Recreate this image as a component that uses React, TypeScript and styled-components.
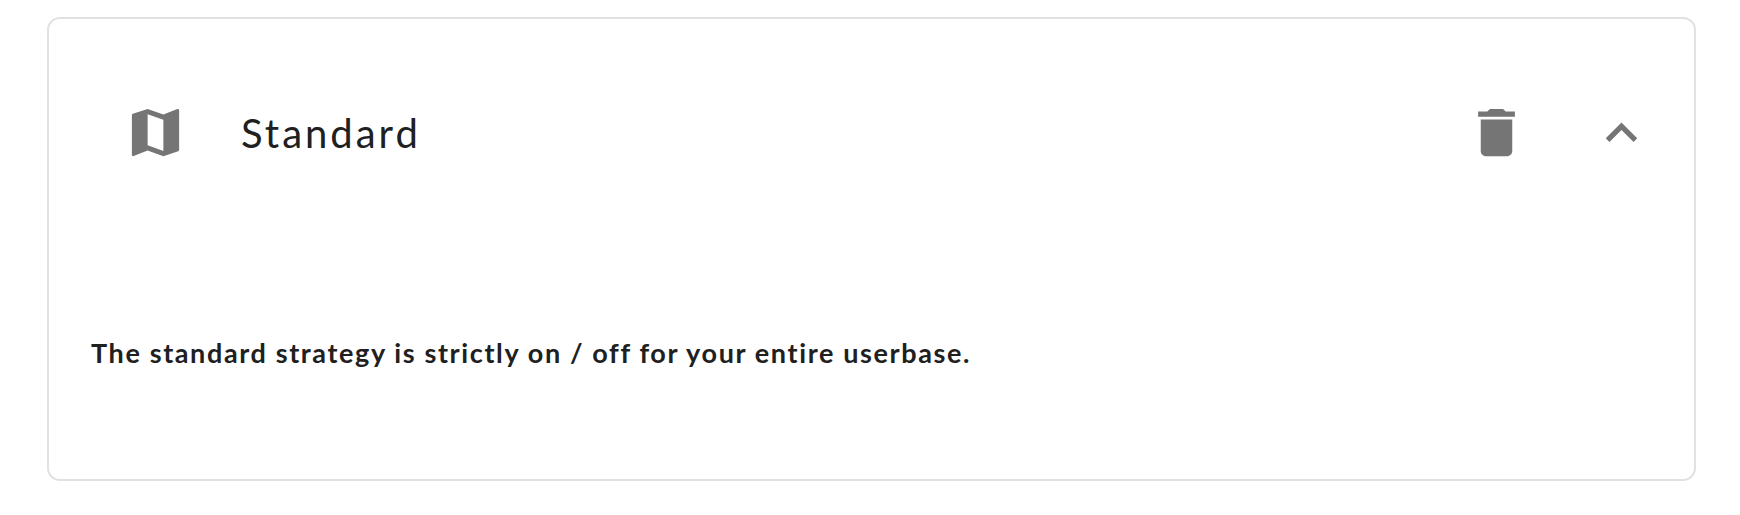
import React from 'react';
import styled, { createGlobalStyle } from 'styled-components';

const GlobalStyle = createGlobalStyle`
  *, *::before, *::after { box-sizing: border-box; }
  body {
    margin: 0;
    background: #fff;
    color: #202021;
    font-family: Lato, "Open Sans", sans-serif;
  }
`;

const Page = styled.main`
  height: 515px;
  padding: 17px 44px 33px 47px;
`;

const Card = styled.section`
  display: flex;
  flex-direction: column;
  height: 464px;
  border: 2px solid #e1e1e1;
  border-radius: 13px;
  background: #fff;
`;

const Header = styled.header`
  display: flex;
  align-items: center;
  height: 227px;
  padding: 0 41px 0 75px;
`;

const Title = styled.h2`
  flex: 1;
  margin: 0 0 0 54px;
  font-size: 40px;
  font-weight: 400;
  line-height: 48px;
  letter-spacing: 3px;
`;

const IconButton = styled.button`
  display: flex;
  padding: 0;
  border: 0;
  background: none;
  cursor: pointer;

  & + & { margin-left: 62px; }
`;

const Icon = styled.svg`
  display: block;
  flex: none;
  width: 63px;
  height: 63px;
  fill: #757575;
`;

const Description = styled.p`
  margin: 89px 42px 0;
  font-size: 27px;
  font-weight: 700;
  line-height: 36px;
  letter-spacing: 1.62px;
  white-space: nowrap;
`;

export default function App() {
  return (
    <>
      <GlobalStyle />
      <Page>
        <Card>
          <Header>
            <Icon viewBox="0 0 24 24" aria-hidden="true">
              <path d="m20.5 3-.16.03L15 5.1 9 3 3.36 4.9c-.21.07-.36.25-.36.48V20.5c0 .28.22.5.5.5l.16-.03L9 18.9l6 2.1 5.64-1.9c.21-.07.36-.25.36-.48V3.5c0-.28-.22-.5-.5-.5zM15 19l-6-2.11V5l6 2.11V19z" />
            </Icon>
            <Title>Standard</Title>
            <IconButton aria-label="Delete strategy">
              <Icon viewBox="0 0 24 24" aria-hidden="true">
                <path d="M6 19c0 1.1.9 2 2 2h8c1.1 0 2-.9 2-2V7H6v12zM19 4h-3.5l-1-1h-5l-1 1H5v2h14V4z" />
              </Icon>
            </IconButton>
            <IconButton aria-label="Collapse">
              <Icon viewBox="0 0 24 24" aria-hidden="true">
                <path d="M12 8.2l-6 6 1.41 1.41L12 11.03l4.59 4.58L18 14.2z" />
              </Icon>
            </IconButton>
          </Header>
          <Description>The standard strategy is strictly on / off for your entire userbase.</Description>
        </Card>
      </Page>
    </>
  );
}
